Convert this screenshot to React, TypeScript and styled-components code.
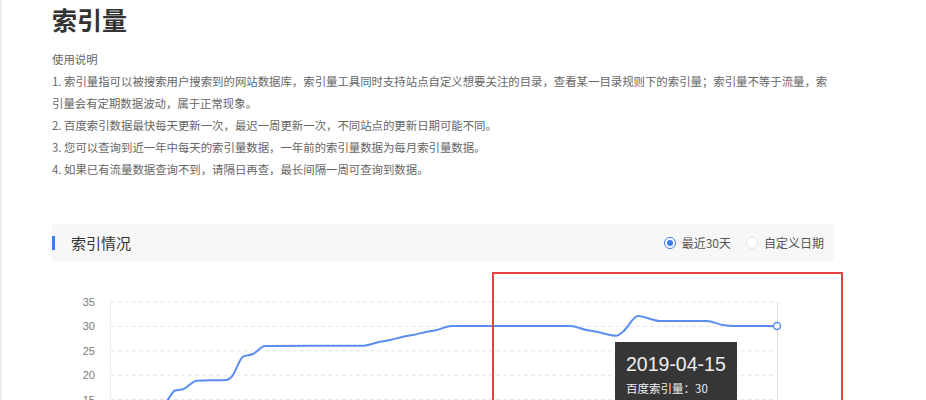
import * as React from 'react'
import styled, { createGlobalStyle } from 'styled-components'

const GlobalStyle = createGlobalStyle`
  html, body {
    margin: 0;
    overflow: hidden;
    background: #fff;
  }
  body {
    font-family: "Noto Sans CJK SC", "Noto Sans", sans-serif;
  }
`

const Page = styled.div`
  border-left: 2px solid #eeeeee;
  box-sizing: border-box;
  height: 400px;
  padding: 4px 0 0 50px;
`

const PageTitle = styled.h1`
  color: #333;
  font-size: 25px;
  font-weight: 700;
  line-height: 31px;
  margin: 0;
`

const Notes = styled.div`
  color: #666;
  font-size: 11.4px;
  line-height: 22px;
  margin-top: 12.5px;
  width: 786px;
`

const NoteLine = styled.p`
  margin: 0;
`

const SectionHeader = styled.div`
  align-items: center;
  background: #f7f7f8;
  box-sizing: border-box;
  display: flex;
  height: 37px;
  justify-content: space-between;
  margin-top: 44.5px;
  padding-right: 10px;
  width: 782px;
`

const SectionTitle = styled.div`
  align-items: center;
  color: #333;
  display: flex;
  font-size: 15px;
  gap: 16px;

  &::before {
    background: #3d7de8;
    content: '';
    display: block;
    height: 14px;
    width: 3px;
  }
`

const RadioGroup = styled.div`
  align-items: center;
  display: flex;
  gap: 15px;
`

const RadioOption = styled.label`
  align-items: center;
  color: #555;
  display: flex;
  font-size: 12px;
  gap: 6px;
`

const RadioDot = styled.span<{ $checked?: boolean }>`
  align-items: center;
  background: #fff;
  border: 1px solid ${(p) => (p.$checked ? '#3d7de8' : '#e2e2e2')};
  border-radius: 50%;
  box-sizing: border-box;
  display: flex;
  height: 12px;
  justify-content: center;
  width: 12px;

  &::after {
    background: #3d7de8;
    border-radius: 50%;
    content: '';
    display: ${(p) => (p.$checked ? 'block' : 'none')};
    height: 6px;
    width: 6px;
  }
`

const ChartArea = styled.div`
  height: 220px;
  position: relative;
  width: 800px;
`

const Highlight = styled.div`
  border: 2px solid #ec3f3f;
  box-sizing: border-box;
  height: 200px;
  left: 440px;
  position: absolute;
  top: 11px;
  width: 351px;
`

const Tooltip = styled.div`
  background: rgba(46, 46, 46, 0.96);
  box-sizing: border-box;
  color: #eee;
  height: 66px;
  left: 563px;
  padding: 9px 0 0 11px;
  position: absolute;
  top: 81px;
  width: 122px;
`

const TooltipDate = styled.div`
  font-family: "Liberation Sans", Arial, sans-serif;
  font-size: 19.5px;
  line-height: 26px;
`

const TooltipValue = styled.div`
  font-size: 11.5px;
  line-height: 18px;
  margin-top: 2px;
`

// 折线上的点（页面坐标）
const points: [number, number][] = [
  [110, 445], [130, 438], [150, 425], [162, 410], [169, 398], [175, 390.5],
  [183, 389.3], [196.7, 380.7], [226.7, 380], [231.7, 376.7], [243, 356.7],
  [253, 354], [265, 346], [363, 345.7], [380, 341.7], [390, 340], [403, 336.7],
  [413, 335], [426.7, 331.7], [436.7, 330], [451.7, 326], [570, 326],
  [586.7, 330], [596.7, 331.7], [616.7, 335.7], [623, 331.7], [638, 316],
  [660, 321], [706.7, 321], [723, 325], [733, 326], [777, 326],
]

const monotonePath = (pts: [number, number][]): string => {
  const n = pts.length
  const m: number[] = []
  for (let i = 0; i < n - 1; i++) {
    m.push((pts[i + 1][1] - pts[i][1]) / (pts[i + 1][0] - pts[i][0]))
  }
  const t: number[] = []
  for (let i = 0; i < n; i++) {
    if (i === 0) t.push(m[0])
    else if (i === n - 1) t.push(m[n - 2])
    else {
      const m0 = m[i - 1]
      const m1 = m[i]
      if (m0 * m1 <= 0) {
        t.push(0)
      } else {
        const h0 = pts[i][0] - pts[i - 1][0]
        const h1 = pts[i + 1][0] - pts[i][0]
        const p = (m0 * h1 + m1 * h0) / (h0 + h1)
        t.push((Math.sign(m0) + Math.sign(m1)) * Math.min(Math.abs(m0), Math.abs(m1), 0.5 * Math.abs(p)))
      }
    }
  }
  let d = `M${pts[0][0]},${pts[0][1]}`
  for (let i = 0; i < n - 1; i++) {
    const [x0, y0] = pts[i]
    const [x1, y1] = pts[i + 1]
    const h = (x1 - x0) / 3
    d += ` C${x0 + h},${y0 + t[i] * h} ${x1 - h},${y1 - t[i + 1] * h} ${x1},${y1}`
  }
  return d
}

const ticks = [35, 30, 25, 20, 15, 10, 5, 0]
const yOf = (v: number) => 302 + (35 - v) * 4.88

const LineChart: React.FC = () => (
  <svg width={800} height={220} viewBox="52 261 800 220" style={{ display: 'block' }}>
    <line x1={110.5} y1={300} x2={110.5} y2={481} stroke="#eeeeee" />
    {ticks.map((v) => (
      <g key={v}>
        <line x1={111} y1={yOf(v)} x2={775} y2={yOf(v)} stroke="#e3e3e3" strokeDasharray="4 3" />
        <text
          x={95}
          y={yOf(v)}
          textAnchor="end"
          dominantBaseline="central"
          fontSize={11}
          fill="#7a7a7a"
          fontFamily='"Liberation Sans", Arial, sans-serif'
        >
          {v}
        </text>
      </g>
    ))}
    <line x1={777.5} y1={302} x2={777.5} y2={481} stroke="#dcdcdc" />
    <path d={monotonePath(points)} fill="none" stroke="#5b8def" strokeWidth={2} />
    <circle cx={777} cy={326} r={3.5} fill="#fff" stroke="#5b8def" strokeWidth={1.5} />
  </svg>
)

export default function App() {
  return (
    <>
      <GlobalStyle />
      <Page>
        <PageTitle>索引量</PageTitle>
        <Notes>
          <NoteLine>使用说明</NoteLine>
          <NoteLine>
            1. 索引量指可以被搜索用户搜索到的网站数据库，索引量工具同时支持站点自定义想要关注的目录，查看某一目录规则下的索引量；索引量不等于流量，索引量会有定期数据波动，属于正常现象。
          </NoteLine>
          <NoteLine>2. 百度索引数据最快每天更新一次，最迟一周更新一次，不同站点的更新日期可能不同。</NoteLine>
          <NoteLine>3. 您可以查询到近一年中每天的索引量数据，一年前的索引量数据为每月索引量数据。</NoteLine>
          <NoteLine>4. 如果已有流量数据查询不到，请隔日再查，最长间隔一周可查询到数据。</NoteLine>
        </Notes>
        <SectionHeader>
          <SectionTitle>索引情况</SectionTitle>
          <RadioGroup>
            <RadioOption>
              <RadioDot $checked />
              最近30天
            </RadioOption>
            <RadioOption>
              <RadioDot />
              自定义日期
            </RadioOption>
          </RadioGroup>
        </SectionHeader>
        <ChartArea>
          <LineChart />
          <Highlight />
          <Tooltip>
            <TooltipDate>2019-04-15</TooltipDate>
            <TooltipValue>百度索引量：30</TooltipValue>
          </Tooltip>
        </ChartArea>
      </Page>
    </>
  )
}
